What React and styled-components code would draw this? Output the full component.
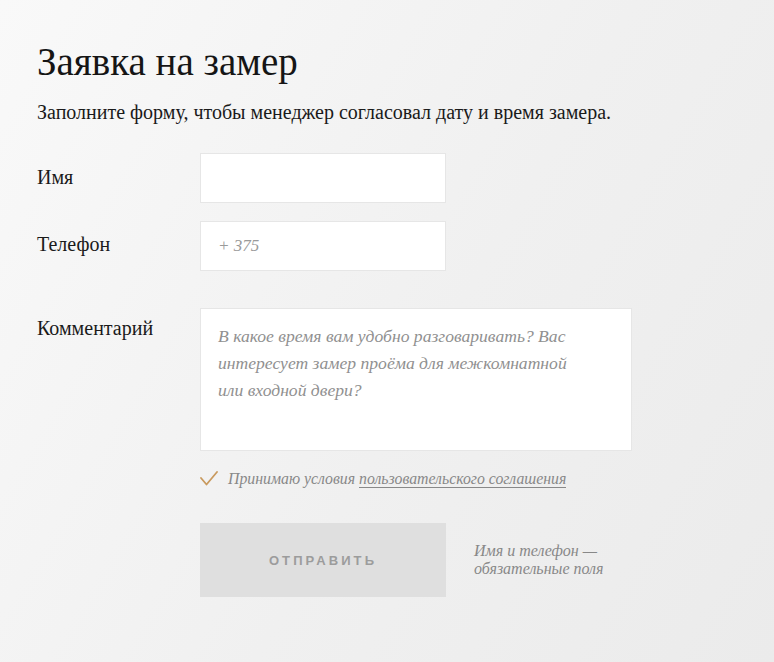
import React from "react";
import styled, { createGlobalStyle } from "styled-components";

const Global = createGlobalStyle`
  html, body { margin: 0; padding: 0; }
  body {
    width: 774px;
    height: 662px;
    overflow: hidden;
    background: linear-gradient(120deg, #f9f9f9 0%, #f0f0f0 55%, #ebebeb 100%);
    font-family: "Liberation Serif", "DejaVu Serif", serif;
    color: #1a1a1a;
  }
`;

const Page = styled.main`
  padding: 36px 37px 0 37px;
`;

const Title = styled.h1`
  margin: 0;
  font-weight: 400;
  font-size: 39px;
  line-height: 52px;
  color: #151515;
`;

const Lead = styled.p`
  margin: 11px 0 0;
  font-size: 20px;
  line-height: 26px;
  color: #1a1a1a;
`;

const Form = styled.form`
  margin-top: 28px;
  display: grid;
  grid-template-columns: 163px auto;
  row-gap: 18px;
`;

const Label = styled.label`
  font-size: 20px;
  line-height: 24px;
  padding-top: ${(p) => p.$top || 11}px;
`;

const Field = styled.div`
  margin-top: ${(p) => p.$mt || 0}px;
`;

const Input = styled.input`
  box-sizing: border-box;
  display: block;
  width: 246px;
  height: 50px;
  border: 1px solid #e6e6e6;
  background: #fff;
  padding: 0 17px;
  font-family: "Liberation Serif", serif;
  font-style: italic;
  font-size: 17px;
  color: #333;
  outline: none;
  &::placeholder { color: #9a9a9a; }
`;

const Textarea = styled.textarea`
  box-sizing: border-box;
  display: block;
  width: 432px;
  height: 143px;
  border: 1px solid #e6e6e6;
  background: #fff;
  padding: 14px 60px 14px 17px;
  font-family: "Liberation Serif", serif;
  font-style: italic;
  font-size: 17.6px;
  line-height: 27px;
  color: #333;
  resize: none;
  outline: none;
  &::placeholder { color: #909090; }
`;

const Spacer = styled.div``;

const Agree = styled.div`
  display: flex;
  align-items: center;
  gap: 10px;
  margin-top: 1px;
  font-style: italic;
  font-size: 15.8px;
  color: #888;
`;

const Link = styled.a`
  color: #888;
  text-decoration: none;
  border-bottom: 1px solid #888;
  line-height: 18px;
`;

const Actions = styled.div`
  display: flex;
  align-items: center;
  gap: 28px;
  margin-top: 35px;
`;

const Button = styled.button`
  width: 246px;
  height: 74px;
  border: none;
  background: #dfdfdf;
  color: #9c9c9c;
  font-family: "Liberation Sans", Arial, sans-serif;
  font-weight: 700;
  font-size: 13px;
  letter-spacing: 3.1px;
  text-transform: uppercase;
  cursor: pointer;
`;

const Note = styled.p`
  margin: 0;
  font-style: italic;
  font-size: 16px;
  line-height: 18px;
  color: #888;
`;

const Check = () => (
  <svg width="18" height="16" viewBox="0 0 18 16">
    <path d="M1 7 L6.5 13.5 L17 1" fill="none" stroke="#c99a5e" strokeWidth="1.8" strokeLinecap="round" strokeLinejoin="round" />
  </svg>
);

export default function App() {
  return (
    <Page>
      <Global />
      <Title>Заявка на замер</Title>
      <Lead>Заполните форму, чтобы менеджер согласовал дату и время замера.</Lead>
      <Form>
        <Label $top={12}>Имя</Label>
        <Field>
          <Input type="text" />
        </Field>
        <Label $top={11}>Телефон</Label>
        <Field>
          <Input type="tel" placeholder="+ 375" />
        </Field>
        <Label $top={27}>Комментарий</Label>
        <Field $mt={19}>
          <Textarea placeholder="В какое время вам удобно разговаривать? Вас интересует замер проёма для межкомнатной или входной двери?" />
        </Field>
        <Spacer />
        <Field>
          <Agree>
            <Check />
            <span>
              Принимаю условия <Link href="#">пользовательского соглашения</Link>
            </span>
          </Agree>
          <Actions>
            <Button type="button">Отправить</Button>
            <Note>
              Имя и телефон —<br />обязательные поля
            </Note>
          </Actions>
        </Field>
      </Form>
    </Page>
  );
}
